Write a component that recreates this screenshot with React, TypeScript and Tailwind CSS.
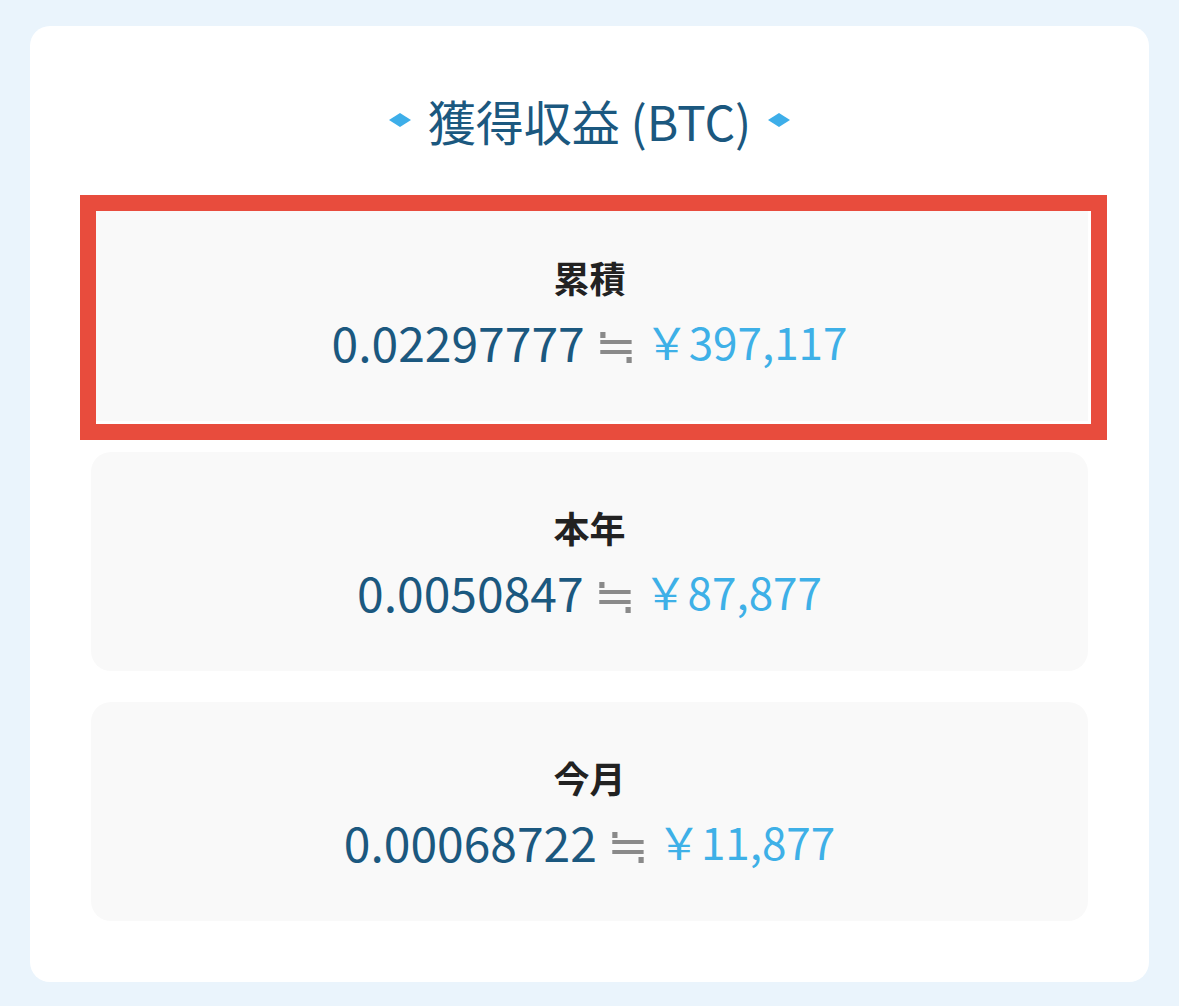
import React from "react"

interface Earning {
  label: string
  btc: string
  jpy: string
  highlight?: boolean
}

const earnings: Earning[] = [
  { label: "累積", btc: "0.02297777", jpy: "397,117", highlight: true },
  { label: "本年", btc: "0.0050847", jpy: "87,877" },
  { label: "今月", btc: "0.00068722", jpy: "11,877" },
]

const Diamond = () => (
  <svg width="24" height="16" viewBox="0 0 24 16" className="shrink-0">
    <polygon points="12,1 23,8 12,15 1,8" fill="#3daee9" />
  </svg>
)

const EarningCard = ({ item }: { item: Earning }) => {
  return (
    <div className="relative">
      <div
        className={
          item.highlight
            ? "flex h-[219px] flex-col items-center justify-center bg-[#f9f9f9] pt-[2px]"
            : "flex h-[219px] flex-col items-center justify-center rounded-[20px] bg-[#f9f9f9] pt-[2px]"
        }
      >
        <div className="text-[36px] font-bold leading-[44px] text-[#222]">{item.label}</div>
        <div className="mt-[12px] flex h-[60px] items-center">
          <span className="text-[48px] leading-[60px] text-[#1b587f]">{item.btc}</span>
          <span className="ml-[10px] text-[50px] font-light leading-[60px] text-[#8a8a8a]">≒</span>
          <span className="ml-[8px] text-[44px] leading-[60px] text-[#3eb0e7]">￥{item.jpy}</span>
        </div>
      </div>
      {item.highlight && (
        <div className="pointer-events-none absolute -top-[7px] -bottom-[19px] -left-[11px] -right-[19px] border-[16px] border-[#e84c3d]" />
      )}
    </div>
  )
}

export default function App() {
  return (
    <div
      className="min-h-screen bg-[#eaf4fc] px-[30px] py-[26px]"
      style={{ fontFamily: '"Noto Sans CJK JP", "Noto Sans", sans-serif' }}
    >
      <div className="rounded-[20px] bg-white px-[61px] pt-[64px] pb-[61px]">
        <div className="flex h-[60px] items-center justify-center gap-[16px]">
          <Diamond />
          <h1 className="text-[48px] font-normal leading-[60px] text-[#1b587f]">獲得収益 (BTC)</h1>
          <Diamond />
        </div>
        <div className="mt-[52px] flex flex-col gap-[31px]">
          {earnings.map((item) => (
            <EarningCard key={item.label} item={item} />
          ))}
        </div>
      </div>
    </div>
  )
}
